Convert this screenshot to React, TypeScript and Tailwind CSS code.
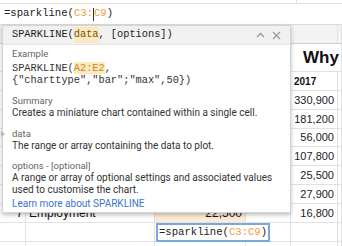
import React from 'react';

// =============================================================================
// GRID SETUP - column widths and row heights of the sheet behind the popup
// =============================================================================
const COLS = [26, 129, 91, 45, 47, 4];
const LINE = 'border-[#e2e2e2]';

const NUMBERS = ['330,900', '181,200', '56,000', '107,800', '25,500', '27,900', '16,800'];
const DATA_HEIGHTS = [19, 19, 18, 19, 19, 19, 19];

const mono = "font-['Liberation_Mono',monospace]";

// range reference, same orange as in Sheets
const Ref = ({ children }: { children: React.ReactNode }) => (
  <span className="text-[#ee9f3c]">{children}</span>
);

// =============================================================================
// ROW - one sheet row, cells laid out in flow
// =============================================================================
function Row({
  height,
  cells = [],
  header = false,
  noRightLine = [],
}: {
  height: number;
  cells?: React.ReactNode[];
  header?: boolean;
  noRightLine?: number[];
}) {
  return (
    <div className="flex" style={{ height }}>
      {COLS.map((w, i) => (
        <div
          key={i}
          className={`shrink-0 h-full border-b ${LINE} ${
            noRightLine.includes(i) ? '' : 'border-r'
          } ${header ? 'bg-[#f3f3f3] border-b-[#cfcfcf]' : ''}`}
          style={{ width: w }}
        >
          {cells[i]}
        </div>
      ))}
    </div>
  );
}

const Num = ({ children }: { children: React.ReactNode }) => (
  <div className="h-full flex items-center justify-end pr-[3px] text-[11px] text-[#222]">
    {children}
  </div>
);

export default function App() {
  return (
    <div className="relative w-[342px] h-[246px] overflow-hidden bg-white font-['Liberation_Sans',Arial,sans-serif]">
      {/* Top strip */}
      <div className="h-[4px] border-b border-[#e0e0e0] flex">
        <div className="w-[297px] border-r border-[#e0e0e0]" />
      </div>

      {/* Formula bar */}
      <div className={`h-[21px] border-b border-[#dadada] flex items-center pl-[4px] text-[10.6px] text-[#222] ${mono}`}>
        <span>=sparkline(</span>
        <Ref>C3:</Ref>
        <span className="inline-block w-px h-[13px] bg-[#333]" />
        <Ref>C9</Ref>
        <span>)</span>
      </div>

      {/* Sheet grid */}
      <Row height={19} header />
      <Row
        height={28}
        noRightLine={[4]}
        cells={[
          null, null, null, null,
          <div className="h-full flex items-center pl-[12px] text-[17px] font-bold text-[#111] whitespace-nowrap">
            Why
          </div>,
        ]}
      />
      <Row
        height={19}
        cells={[
          null, null, null, null,
          <div className="h-full flex items-center pl-[3px] text-[10px] font-bold text-[#111]">2017</div>,
        ]}
      />
      {NUMBERS.map((n, i) => (
        <Row
          key={n}
          height={DATA_HEIGHTS[i]}
          cells={
            i === NUMBERS.length - 1
              ? [
                  <div className="h-full flex items-center justify-end pr-[2px] text-[12px] text-[#111]">7</div>,
                  <div className="h-full flex items-center pl-[3px] text-[12px] text-[#111]">Employment</div>,
                  <div className="h-full bg-[#fcebd6] flex items-center justify-end pr-[3px] text-[12px] text-[#111]">
                    22,500
                  </div>,
                  null,
                  <Num>{n}</Num>,
                ]
              : [null, null, null, null, <Num>{n}</Num>]
          }
        />
      ))}
      <Row height={19} />
      <Row height={19} />

      {/* Formula help popup */}
      <div className="absolute left-[2px] top-[25px] w-[289px] h-[188px] bg-white border border-[#d4d4d4] shadow-[0_2px_4px_rgba(0,0,0,0.25)] text-[#333]">
        <div className={`h-[19px] bg-[#f1f1f1] border-b border-[#e4e4e4] flex items-center pl-[9px] pr-[9px] text-[10.3px] text-[#222] ${mono}`}>
          <span>SPARKLINE(</span>
          <span className="bg-[#fce9c2] text-[#7a5200]">data</span>
          <span>, [options])</span>
          <div className="ml-auto flex items-center gap-[7px]">
            <svg width="9" height="6" viewBox="0 0 9 6">
              <path d="M1 5 L4.5 1.5 L8 5" fill="none" stroke="#9a9a9a" strokeWidth="1.3" />
            </svg>
            <svg width="9" height="9" viewBox="0 0 9 9">
              <path d="M1 1 L8 8 M8 1 L1 8" stroke="#9a9a9a" strokeWidth="1.3" />
            </svg>
          </div>
        </div>

        <div className="pl-[9px] pt-[3px] text-[10px] leading-[12px] font-['Roboto',sans-serif]">
          <div className="text-[9.5px] text-[#666]">Example</div>
          <div className={`mt-[2px] text-[10.3px] text-[#333] ${mono}`}>
            <div>
              SPARKLINE(<span className="bg-[#fce9c2] text-[#c98a12]">A2:E2</span>,
            </div>
            <div>{'{"charttype","bar";"max",50})'}</div>
          </div>

          <div className="mt-[9px] text-[9.5px] text-[#666]">Summary</div>
          <div>Creates a miniature chart contained within a single cell.</div>

          <div className="relative mt-[9px] text-[9.5px] text-[#666]">
            <svg className="absolute left-[-11px] top-[3px]" width="4" height="6" viewBox="0 0 4 6">
              <path d="M0 0 L4 3 L0 6 Z" fill="#b5b5b5" />
            </svg>
            data
          </div>
          <div>The range or array containing the data to plot.</div>

          <div className="mt-[8px] text-[9.5px] text-[#666]">options - [optional]</div>
          <div>A range or array of optional settings and associated values</div>
          <div>used to customise the chart.</div>

          <div className="mt-[2px] text-[#3c74c9]">Learn more about SPARKLINE</div>
        </div>
      </div>

      {/* In-cell formula editor */}
      <div className={`absolute left-[156px] top-[223px] w-[114px] h-[19px] bg-white border-2 border-[#7aa7e0] flex items-center pl-[1px] text-[10.6px] text-[#222] ${mono}`}>
        <span>=sparkline(</span>
        <Ref>C3:C9</Ref>
        <span>)</span>
      </div>
    </div>
  );
}
